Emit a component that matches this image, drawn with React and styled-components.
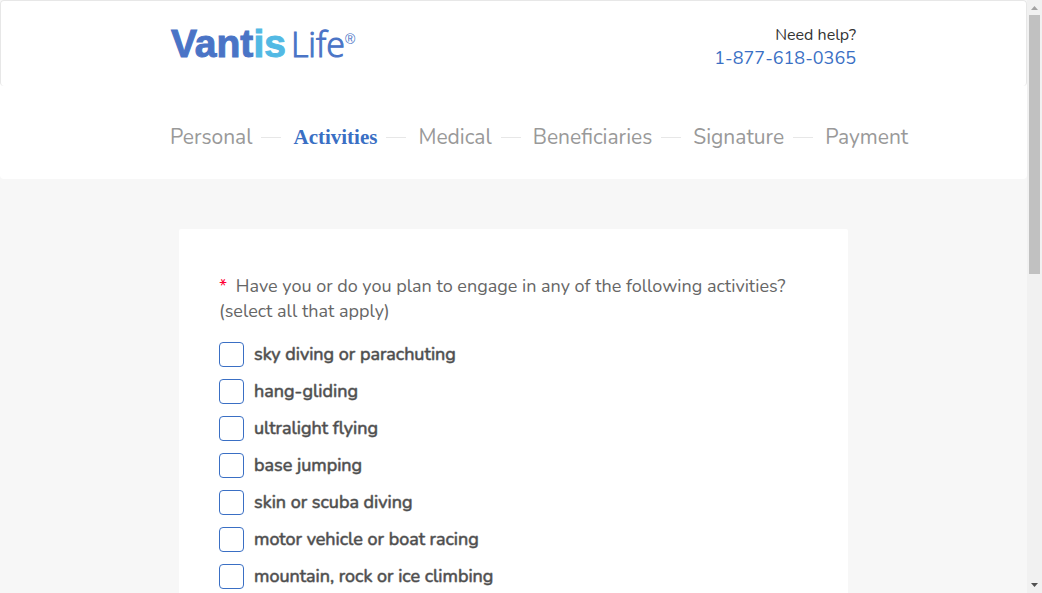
import React from 'react';
import styled, { createGlobalStyle } from 'styled-components';

const GlobalStyle = createGlobalStyle`
  *, *::before, *::after { box-sizing: border-box; }
  html, body { margin: 0; padding: 0; }
  body {
    background: #f7f7f7;
    color: #333;
    font-family: Nunito, Lato, "Open Sans", sans-serif;
    font-weight: 400;
  }
`;

const Window = styled.div`
  display: flex;
  height: 100vh;
  overflow: hidden;
`;

const Page = styled.div`
  flex: 1;
  min-width: 0;
  overflow: hidden;
`;

const Masthead = styled.div`
  background: #fff;
  border-radius: 4px;
`;

const Header = styled.header`
  height: 86px;
  border: 1px solid #e7e7e7;
  border-bottom: 0;
  border-radius: 4px;
`;

const HeaderInner = styled.div`
  display: flex;
  justify-content: space-between;
  max-width: 685px;
  margin: 0 auto;
  padding-top: 23px;
`;

const Logo = styled.a`
  display: flex;
  align-items: baseline;
  height: 40px;
  color: #4a74c6;
  font-family: "Liberation Sans", Arial, sans-serif;
  font-size: 39px;
  font-weight: 700;
  line-height: 40px;
  text-decoration: none;
  -webkit-text-stroke: 1px;
`;

const LogoAccent = styled.span`
  color: #52b9e4;
`;

const LogoLight = styled.span`
  margin-left: 5px;
  font-family: "Open Sans", sans-serif;
  font-size: 34px;
  font-weight: 300;
`;

const LogoMark = styled.sup`
  align-self: flex-start;
  font-size: 14px;
  font-weight: 400;
  line-height: 30px;
  -webkit-text-stroke: 0;
`;

const Help = styled.div`
  display: flex;
  flex-direction: column;
  align-items: flex-end;
  font-size: 16px;
  line-height: 23px;
`;

const Phone = styled.a`
  color: #3a6fc4;
  font-size: 18px;
  text-decoration: none;
`;

const StepNav = styled.nav`
  max-width: 687px;
  margin: 0 auto;
`;

const Steps = styled.ol`
  display: flex;
  margin: 0;
  padding: 36px 0 27px;
  list-style: none;
`;

const Step = styled.li`
  display: flex;
  align-items: center;
  line-height: 30px;

  &:not(:last-child)::after {
    content: "";
    width: 20px;
    height: 1px;
    margin: 0 12px 0 9px;
    background: #e7e7e7;
  }
`;

const StepLink = styled.a`
  color: ${(p) => (p.$active ? '#3a6fc4' : '#999')};
  font-family: ${(p) => (p.$active ? '"Liberation Serif", serif' : 'inherit')};
  font-size: 21px;
  font-weight: ${(p) => (p.$active ? 700 : 400)};
  text-decoration: none;
`;

const Card = styled.form`
  max-width: 669px;
  margin: 50px auto 0;
  padding: 45px 40px;
  background: #fff;
  border-radius: 2px;
`;

const Question = styled.fieldset`
  margin: 0;
  padding: 0;
  border: 0;
`;

const Prompt = styled.legend`
  padding: 0;
  margin-bottom: 18px;
  color: #666;
  font-size: 18px;
  line-height: 25px;
`;

const Required = styled.span`
  margin-right: 4px;
  color: #ff0033;
`;

const Option = styled.label`
  display: flex;
  align-items: center;
  gap: 10px;
  margin-bottom: 12px;
  color: #4d4d4d;
  font-size: 18px;
`;

const Checkbox = styled.input`
  appearance: none;
  width: 25px;
  height: 25px;
  margin: 0;
  background: #fff;
  border: 1px solid #3a6fc4;
  border-radius: 4px;

  &:checked { background: #3a6fc4; }
`;

const OptionText = styled.span`
  line-height: 25px;
  -webkit-text-stroke: 1px rgba(77, 77, 77, 0.6);
`;

const ScrollTrack = styled.div`
  display: flex;
  flex-direction: column;
  align-items: center;
  flex: 0 0 15px;
  background: #f1f1f1;
`;

const ScrollArrow = styled.svg`
  display: block;
  width: 15px;
  height: 15px;
  fill: ${(p) => (p.$enabled ? '#505050' : '#a3a3a3')};
`;

const ScrollRun = styled.div`
  flex: 1;
  width: 11px;
`;

const ScrollThumb = styled.div`
  height: 46%;
  background: #c1c1c1;
`;

const steps = ['Personal', 'Activities', 'Medical', 'Beneficiaries', 'Signature', 'Payment'];

const activities = [
  'sky diving or parachuting',
  'hang-gliding',
  'ultralight flying',
  'base jumping',
  'skin or scuba diving',
  'motor vehicle or boat racing',
  'mountain, rock or ice climbing',
];

export default function App() {
  return (
    <Window>
      <GlobalStyle />
      <Page>
        <Masthead>
          <Header>
            <HeaderInner>
              <Logo href="#home" aria-label="Vantis Life">
                <span>Vant<LogoAccent>is</LogoAccent></span>
                <LogoLight>Life</LogoLight>
                <LogoMark>®</LogoMark>
              </Logo>
              <Help>
                <span>Need help?</span>
                <Phone href="tel:1-877-618-0365">1-877-618-0365</Phone>
              </Help>
            </HeaderInner>
          </Header>
          <StepNav aria-label="Application steps">
            <Steps>
              {steps.map((step) => (
                <Step key={step}>
                  <StepLink href={`#${step.toLowerCase()}`} $active={step === 'Activities'}>{step}</StepLink>
                </Step>
              ))}
            </Steps>
          </StepNav>
        </Masthead>
        <Card>
          <Question>
            <Prompt>
              <Required>*</Required> Have you or do you plan to engage in any of the following activities? (select all that apply)
            </Prompt>
            {activities.map((activity) => (
              <Option key={activity}>
                <Checkbox type="checkbox" name="activities" value={activity} />
                <OptionText>{activity}</OptionText>
              </Option>
            ))}
          </Question>
        </Card>
      </Page>
      <ScrollTrack aria-hidden="true">
        <ScrollArrow viewBox="0 0 15 15"><path d="M4 10h7L7.5 6z" /></ScrollArrow>
        <ScrollRun><ScrollThumb /></ScrollRun>
        <ScrollArrow viewBox="0 0 15 15" $enabled><path d="M4 5h7L7.5 9z" /></ScrollArrow>
      </ScrollTrack>
    </Window>
  );
}
